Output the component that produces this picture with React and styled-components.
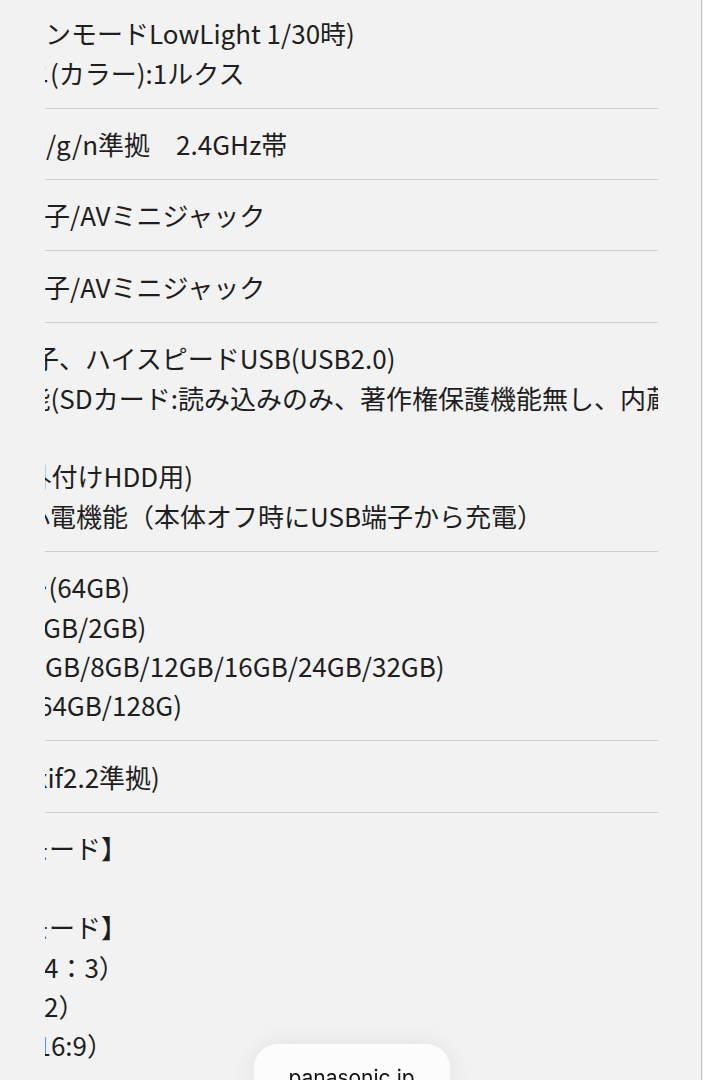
import React from "react";
import styled, { createGlobalStyle } from "styled-components";

const Global = createGlobalStyle`
  html, body {
    margin: 0;
    padding: 0;
    overflow: hidden;
    background: #f2f2f2;
  }
  body {
    font-family: "Noto Sans CJK JP", "Noto Sans", sans-serif;
    color: #1e1e1e;
  }
`;

const Page = styled.div`
  width: 703px;
  height: 1080px;
  overflow: hidden;
  background: #f2f2f2;
`;

const Clip = styled.div`
  margin: -2.3px 0 0 45px;
  width: 613px;
  overflow: hidden;
`;

const Row = styled.div`
  padding: 15.5px 0;
  border-bottom: 1px solid #cdcdcd;
  font-size: 26px;
  line-height: 39.4px;
`;

const Line = styled.div`
  white-space: pre;
  margin-left: ${(p) => -(p.$cut || 0)}px;
`;

const Pill = styled.div`
  position: fixed;
  left: 50%;
  bottom: -30px;
  transform: translateX(-50%);
  width: 196px;
  height: 66px;
  border-radius: 24px;
  background: #fcfcfc;
  box-shadow: 0 0 24px rgba(0, 0, 0, 0.07);
  display: flex;
  justify-content: center;
  padding-top: 21px;
  box-sizing: border-box;
  font-family: Inter, "Liberation Sans", sans-serif;
  font-size: 21px;
  color: #111;
`;

const EdgeLine = styled.div`
  position: fixed;
  top: 0;
  bottom: 0;
  right: 1px;
  width: 1px;
  background: #c4c4c4;
`;

const rows = [
  [
    { t: "ンモードLowLight 1/30時)" },
    { t: "ニ(カラー):1ルクス", cut: 21 },
  ],
  [{ t: "b/g/n準拠　2.4GHz帯", cut: 15 }],
  [{ t: "子/AVミニジャック", cut: 1 }],
  [{ t: "子/AVミニジャック", cut: 1 }],
  [
    { t: "子、ハイスピードUSB(USB2.0)", cut: 12 },
    { t: "能(SDカード:読み込みのみ、著作権保護機能無し、内蔵HDD)", cut: 20.5 },
    { t: " " },
    { t: "外付けHDD用)", cut: 19.5 },
    { t: "心電機能（本体オフ時にUSB端子から充電）", cut: 21 },
  ],
  [
    { t: "ー(64GB)", cut: 22.5 },
    { t: "GB/2GB)", cut: 2 },
    { t: "GB/8GB/12GB/16GB/24GB/32GB)" },
    { t: "64GB/128G)", cut: 7 },
  ],
  [{ t: "Exif2.2準拠)", cut: 25 }],
  [
    { t: "モード】", cut: 22 },
    { t: " " },
    { t: "モード】", cut: 22 },
    { t: "4：3）", cut: 1 },
    { t: "2）", cut: 1 },
    { t: "16:9）", cut: 8.5 },
  ],
];

export default function App() {
  return (
    <Page>
      <Global />
      <Clip>
        {rows.map((lines, i) => (
          <Row key={i}>
            {lines.map((l, j) => (
              <Line key={j} $cut={l.cut}>
                {l.t}
              </Line>
            ))}
          </Row>
        ))}
      </Clip>
      <EdgeLine />
      <Pill>panasonic.jp</Pill>
    </Page>
  );
}
